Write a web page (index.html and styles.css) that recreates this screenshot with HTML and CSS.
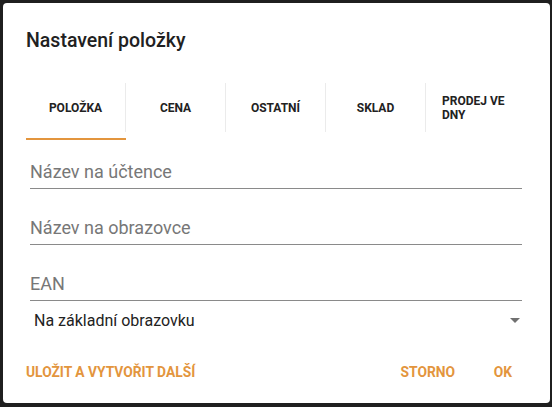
FILE: index.html
```html
<!DOCTYPE html>
<html lang="cs">
<head>
    <meta charset="UTF-8">
    <meta name="viewport" content="width=device-width, initial-scale=1.0">
    <title>Nastavení položky</title>
    <link rel="stylesheet" href="styles.css">
</head>
<body>
    <div class="dialog">
        <h2 class="dialog-title">Nastavení položky</h2>
        <div class="tabs">
            <div class="tab active"><span class="tab-label"><span>POLOŽKA</span></span></div>
            <div class="tab"><span class="tab-label"><span>CENA</span></span></div>
            <div class="tab"><span class="tab-label"><span>OSTATNÍ</span></span></div>
            <div class="tab"><span class="tab-label"><span>SKLAD</span></span></div>
            <div class="tab"><span class="tab-label last"><span>PRODEJ VE DNY</span></span></div>
        </div>
        <div class="fields">
            <div class="field"><input type="text" placeholder="Název na účtence"></div>
            <div class="field"><input type="text" placeholder="Název na obrazovce"></div>
            <div class="field"><input type="text" placeholder="EAN"></div>
            <div class="select">
                <span>Na základní obrazovku</span>
                <span class="arrow"></span>
            </div>
        </div>
        <div class="actions">
            <button type="button">Uložit a vytvořit další</button>
            <div class="spacer"></div>
            <button type="button">Storno</button>
            <button type="button" class="ok">OK</button>
        </div>
    </div>
</body>
</html>
```

FILE: styles.css
```css
body {
    font-family: Roboto, "Liberation Sans", sans-serif;
    background-color: #1f1f1f;
    margin: 0;
    padding: 3px;
}
.dialog {
    background-color: #fff;
    width: 547px;
    height: 400px;
    border-radius: 4px;
    box-sizing: border-box;
    padding-top: 26px;
}
.dialog-title {
    margin: 0;
    padding-left: 23px;
    font-size: 19.5px;
    line-height: 24px;
    font-weight: 500;
    color: #212121;
}
.tabs {
    display: flex;
    margin: 30px 0 0 23px;
}
.tab {
    width: 100px;
    height: 57px;
    padding-bottom: 7px;
    box-sizing: border-box;
}
.tab.active {
    border-bottom: 2px solid #e3953d;
    padding-bottom: 5px;
}
.tab-label {
    display: flex;
    align-items: center;
    justify-content: center;
    height: 49px;
    padding: 0 16px;
    border-right: 1px solid #ebebeb;
    font-size: 12px;
    font-weight: 700;
    line-height: 14px;
    color: #222;
}
.tab-label.last {
    border-right: none;
}
.fields {
    padding: 0 28px 0 27px;
}
.field {
    padding: 21px 0 5px;
    border-bottom: 1px solid #8a8a8a;
    margin-bottom: 7px;
}
.field input {
    display: block;
    width: 100%;
    border: none;
    outline: none;
    padding: 0;
    font-family: inherit;
    font-size: 18px;
    line-height: 22px;
    height: 22px;
    color: #222;
}
.field input::placeholder {
    color: #777;
}
.select {
    display: flex;
    align-items: center;
    justify-content: space-between;
    height: 36px;
    margin-top: -7px;
    padding: 2px 2px 0 4px;
    box-sizing: border-box;
    font-size: 16px;
    color: #222;
}
.arrow {
    width: 0;
    height: 0;
    border-left: 5px solid transparent;
    border-right: 5px solid transparent;
    border-top: 5px solid #707070;
}
.actions {
    display: flex;
    align-items: center;
    padding: 17px 15px 0;
}
.spacer {
    flex: 1;
}
.actions button {
    min-width: 64px;
    height: 36px;
    padding: 0 8px;
    margin-left: 8px;
    background: none;
    border: none;
    font-family: inherit;
    font-size: 13.8px;
    font-weight: 700;
    text-transform: uppercase;
    color: #e3953d;
    cursor: pointer;
}
.actions button:first-child {
    margin-left: 0;
}
```
